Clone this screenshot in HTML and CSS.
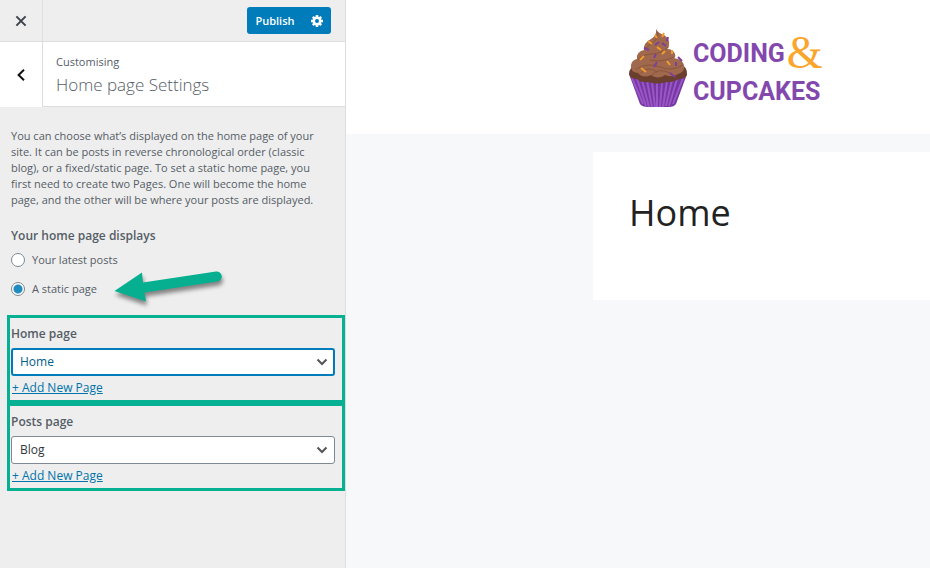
FILE: index.html
```html
<!DOCTYPE html>
<html lang="en-GB">
<head>
<meta charset="utf-8">
<meta name="viewport" content="width=device-width, initial-scale=1">
<title>Customise: Home page Settings</title>
<link rel="stylesheet" href="styles.css">
</head>
<body>
<div class="customizer">
  <aside class="sidebar">
    <header class="actions">
      <button class="close" type="button" aria-label="Close">
        <svg width="12" height="12" viewBox="0 0 12 12"><path d="M1.4 1.4l9.2 9.2M10.6 1.4l-9.2 9.2"/></svg>
      </button>
      <div class="publish-group">
        <button class="publish" type="button">Publish</button>
        <button class="gear" type="button" aria-label="Publish settings">
          <svg width="14" height="14" viewBox="0 0 14 14">
            <g stroke="#fff" stroke-width="2.500"><path d="M7 1v12M1 7h12M2.8 2.8l8.4 8.4M11.2 2.8l-8.4 8.4"/></g>
            <circle cx="7" cy="7" r="4.5" fill="#fff"/><circle cx="7" cy="7" r="2" fill="#007cba"/>
          </svg>
        </button>
      </div>
    </header>
    <div class="section-head">
      <button class="back" type="button" aria-label="Back">
        <svg width="10" height="14" viewBox="0 0 10 14"><path d="M8 1.8L2.6 7 8 12.2"/></svg>
      </button>
      <div class="section-title">
        <span>Customising</span>
        <h2>Home page Settings</h2>
      </div>
    </div>
    <form class="controls">
      <p class="description">You can choose what’s displayed on the home page of your site. It can be posts in reverse chronological order (classic blog), or a fixed/static page. To set a static home page, you first need to create two Pages. One will become the home page, and the other will be where your posts are displayed.</p>
      <fieldset class="choices">
        <legend>Your home page displays</legend>
        <label><input type="radio" name="show"> Your latest posts</label>
        <label><input type="radio" name="show" checked> A static page</label>
        <svg class="arrow" width="124" height="48" viewBox="0 0 124 48" aria-hidden="true">
          <path d="M10.500 29 38 10.500 39 20.500 112 9.500A5 5 0 0 1 113.500 19.500L40.500 30.500 42 39.500Z"/>
        </svg>
      </fieldset>
      <div class="field">
        <label for="home">Home page</label>
        <div class="select-wrap">
          <select id="home" class="active"><option>Home</option></select>
          <svg width="12" height="8" viewBox="0 0 12 8"><path d="M1.500 1.500L6 6l4.500-4.500"/></svg>
        </div>
        <a href="#">+ Add New Page</a>
      </div>
      <div class="field">
        <label for="posts">Posts page</label>
        <div class="select-wrap">
          <select id="posts"><option>Blog</option></select>
          <svg width="12" height="8" viewBox="0 0 12 8"><path d="M1.500 1.500L6 6l4.500-4.500"/></svg>
        </div>
        <a href="#">+ Add New Page</a>
      </div>
    </form>
  </aside>
  <main class="preview">
    <header class="site-header">
      <a class="logo" href="#">
        <svg width="60" height="80" viewBox="0 0 60 80" aria-hidden="true">
          <path fill="#74389f" d="M1 45L59 45 48 75Q46 78 41 78H20Q14 78 12 75Z"/>
          <g stroke="#9a55c8" stroke-width="2" fill="none">
            <path d="M4 49l11 26M9 50l9 27M14 51l7 27M19 52l5 26M24 53l3 25M29 53v25M34 53l-2 25M39 52l-4 26M44 51l-6 26M49 50l-8 27M55 49L45 75"/>
          </g>
          <path fill="#6a3f2e" d="M1 45Q1 38 9 36L52 35Q60 38 59 46Q57 50 51 50Q45 54 38 53Q29 56 21 53Q13 54 9 50Q2 50 1 45Z"/>
          <path fill="#a0684c" d="M28 0Q30 4 36 6Q42 10 41 16Q41 19 39 20Q45 20 47 25Q48 28 46 29Q55 30 56 37Q57 43 50 45Q44 49 37 46Q30 51 23 46Q15 50 10 44Q2 43 3 36Q4 31 9 30Q8 23 16 21Q15 14 23 10Q29 7 28 0Z"/>
          <g fill="none" stroke="#8a563e" stroke-width="1" stroke-linecap="round">
            <path d="M29 3Q31 7 27 12Q22 16 17 20M40 18Q34 25 23 25Q13 26 10 31M46 28Q34 34 22 31M55 36Q44 43 32 38Q20 33 8 40M24 46Q30 38 42 44M13 44Q19 36 29 43"/>
          </g>
          <g stroke-width="2" stroke-linecap="butt">
            <path stroke="#f39c2b" d="M27 6l2 3M36 4l-2 4M20 12l4 3M29 18l4 3M37 22l-3 3M44 21v4M16 27l-4 4M39 32l3 4M13 39l5 4"/>
            <path stroke="#7d3f9e" d="M40 8l-1 4M31 13l-4 3M34 14l4 3M16 19l5 2M28 25l-2 4M50 28l4 4M48 33v4M29 33l-3 5M42 44l5 4"/>
          </g>
        </svg>
        <span class="wordmark">
          <span>CODING</span><span class="amp">&amp;</span>
          <span class="second">CUPCAKES</span>
        </span>
      </a>
    </header>
    <article class="page-card"><h1>Home</h1></article>
  </main>
</div>
</body>
</html>
```
FILE: styles.css
```css
* { box-sizing: border-box; }

body {
  margin: 0;
  font: 11px/16px "Open Sans", "Noto Sans", sans-serif;
  color: #555d66;
  background: #f7f8fa;
}

h1, h2, p, fieldset { margin: 0; padding: 0; border: 0; }
button { margin: 0; padding: 0; border: 0; background: none; font: inherit; color: inherit; }
a { color: #0073aa; }

.customizer {
  display: grid;
  grid-template-columns: 346px 1fr;
  min-height: 100vh;
}

.sidebar { background: #eee; border-right: 1px solid #ddd; }

.actions {
  display: flex;
  justify-content: space-between;
  align-items: center;
  height: 42px;
  padding-right: 14px;
  border-bottom: 1px solid #ddd;
}

.close, .back {
  display: flex;
  align-items: center;
  justify-content: center;
  width: 43px;
  align-self: stretch;
  border-right: 1px solid #ddd;
}
.close path, .back path { fill: none; stroke: #3c434a; stroke-width: 2; }
.back path { stroke: #111; }

.publish-group {
  display: flex;
  height: 27px;
  border-radius: 3px;
  background: #007cba;
  color: #fff;
}
.publish { width: 56px; font-weight: 600; }
.gear { display: flex; align-items: center; justify-content: center; width: 28px; }

.section-head { display: flex; height: 65px; background: #fff; }
.section-title { flex: 1; padding: 12px 13px 0; border-bottom: 1px solid #ddd; }
.section-title h2 { font-size: 17px; line-height: 30px; font-weight: 300; }

.controls { padding: 21px 0 0 7px; }
.description { padding: 0 20px 0 4px; }

.choices { position: relative; padding-left: 4px; }
.choices legend { padding: 19px 0 0; font-size: 12px; line-height: 18px; font-weight: 600; }
.choices label { display: flex; align-items: center; gap: 7px; height: 29px; }
.choices input {
  appearance: none;
  width: 14px;
  height: 14px;
  margin: 0;
  border: 1px solid #7e8993;
  border-radius: 50%;
  background: #fff;
}
.choices input:checked { background: radial-gradient(circle, #1e8cbe 4px, #fff 5px); }

.arrow { position: absolute; left: 97px; bottom: -7px; filter: drop-shadow(1px 4px 2px rgba(0, 0, 0, 0.45)); }
.arrow path { fill: #06af8f; }

.field {
  height: 88px;
  padding: 7px 7px 0 1px;
  border: 3px solid #06b092;
}
.choices + .field { margin-top: 12px; }
.field label { display: block; font-size: 12px; line-height: 18px; font-weight: 600; }
.field > a { display: inline-block; margin-left: 1px; font-size: 12px; font-weight: 500; }

.select-wrap { position: relative; margin: 5px 0 4px; }
.select-wrap select {
  appearance: none;
  display: block;
  width: 100%;
  height: 28px;
  padding: 0 8px;
  border: 1px solid #7e8993;
  border-radius: 3px;
  background: #fff;
  font: inherit;
  font-size: 12px;
  color: #32373c;
}
.select-wrap select.active { padding: 0 7px; border: 2px solid #007cba; color: #016087; }
.select-wrap svg { position: absolute; right: 7px; top: 10px; fill: none; stroke: #555; stroke-width: 2; pointer-events: none; }

.site-header { height: 134px; padding: 29px 0 0 282px; background: #fff; }
.logo { display: flex; gap: 5px; text-decoration: none; }
.wordmark {
  display: grid;
  grid-template-columns: auto 1fr;
  grid-template-rows: 38px 38px;
  column-gap: 2px;
  padding-top: 6px;
  font: bold 25px/38px Roboto, "Liberation Sans", sans-serif;
  color: #8348ae;
}
.amp { font: 46px/36px "Liberation Serif", serif; color: #faa52b; }
.second { grid-column: 1 / -1; }

.page-card { min-height: 148px; margin: 18px 0 0 247px; padding: 34px 36px; background: #fff; }
.page-card h1 { font-size: 36px; line-height: 54px; font-weight: 400; color: #222; }
```
